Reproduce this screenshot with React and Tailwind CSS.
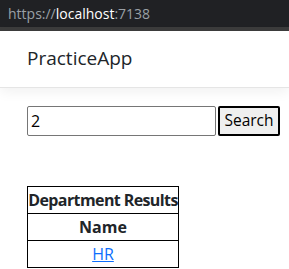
import React, { useState } from 'react'

const App = () => {
  const [query, setQuery] = useState('2')

  return (
    <div className="w-[289px] h-[269px] bg-white overflow-hidden font-['Open_Sans',sans-serif]">
      {/* Browser address bar */}
      <div className="h-[27px] bg-[#202124] flex items-center pl-[8px] text-[14px]">
        <span className="text-[#9aa0a6]">https://</span>
        <span className="text-white">localhost</span>
        <span className="text-[#9aa0a6]">:7138</span>
      </div>
      <div className="h-[4px] bg-[#3c3c3c]" />

      {/* Nav */}
      <header className="h-[57px] border-b border-[#e5e5e5] shadow-[0_4px_12px_rgba(0,0,0,0.06)] flex items-center pl-[27px]">
        <span className="text-[19px] text-[#212529] leading-none pb-[2px]">PracticeApp</span>
      </header>

      <main className="pl-[27px] pt-[18px]">
        <form className="flex gap-[2px]" onSubmit={(e) => e.preventDefault()}>
          <input
            value={query}
            onChange={(e) => setQuery(e.target.value)}
            className="w-[189px] h-[30px] border border-[#767676] rounded-[2px] px-[3px] text-[16px] text-black outline-none"
          />
          <button className="w-[62px] h-[30px] border-2 border-black bg-[#efefef] rounded-[2px] text-[15.5px] text-black">
            Search
          </button>
        </form>

        <table className="mt-[50px] w-[152px] border-collapse text-[16px] text-[#212529]">
          <thead>
            <tr>
              <th className="h-[27px] border border-black font-bold p-0 tracking-[-0.6px] whitespace-nowrap">Department Results</th>
            </tr>
          </thead>
          <tbody>
            <tr>
              <th className="h-[27px] border border-black font-bold p-0">Name</th>
            </tr>
            <tr>
              <td className="h-[27px] border border-black text-center p-0">
                <a href="#" className="text-[#0d6efd] underline">HR</a>
              </td>
            </tr>
          </tbody>
        </table>
      </main>
    </div>
  )
}

export default App
